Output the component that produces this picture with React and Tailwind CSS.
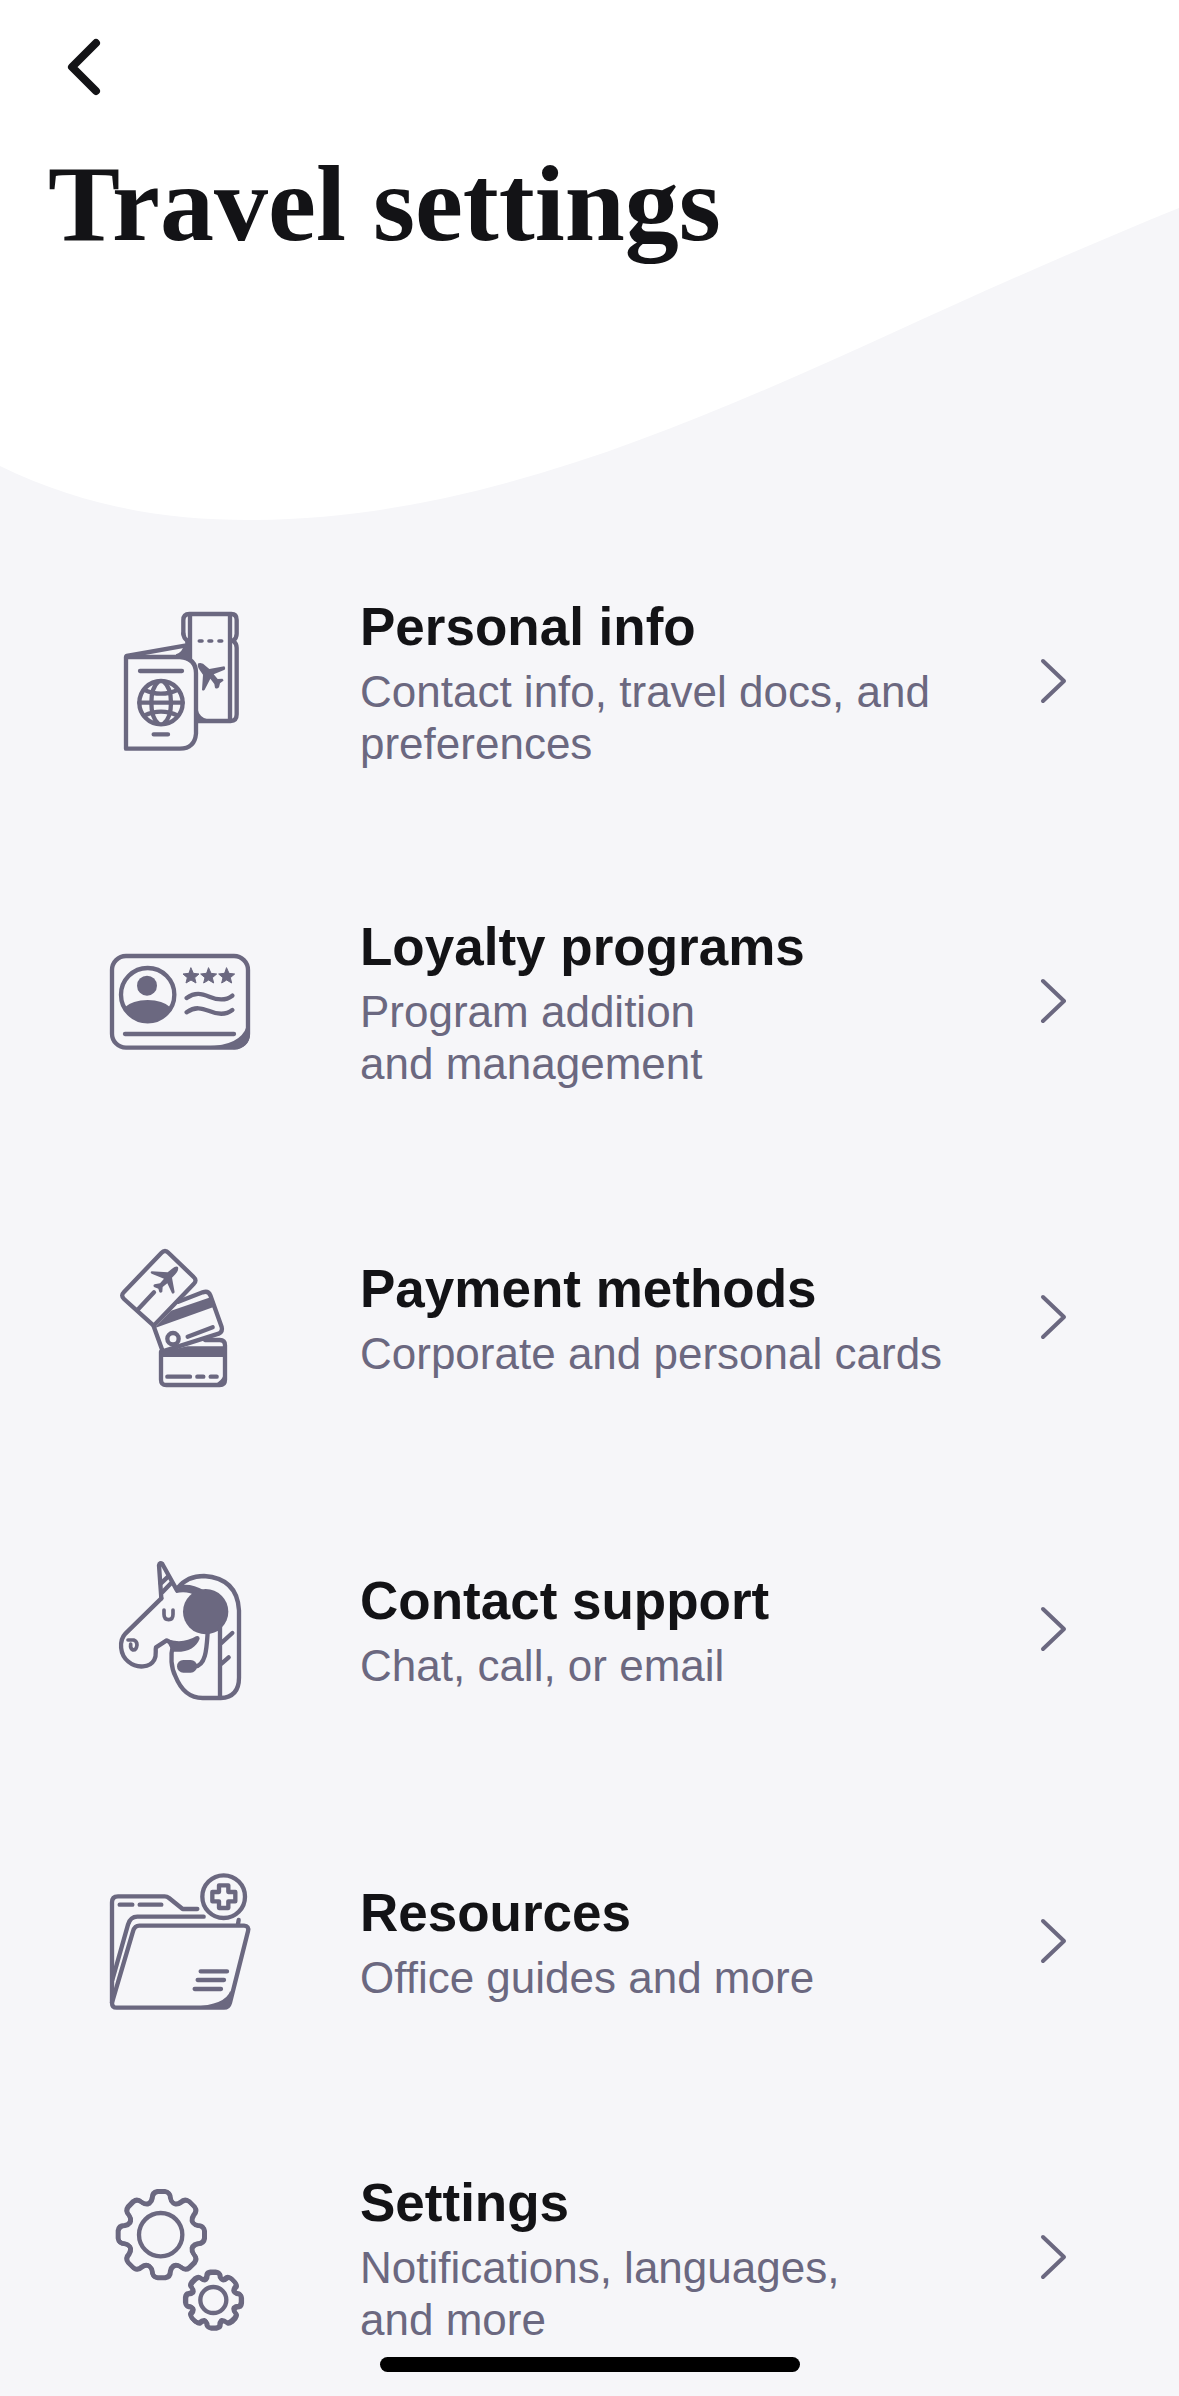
import React from "react";

function Illustration({ viewBox, children }) {
  return (
    <svg
      className="size-[168px]"
      viewBox={viewBox}
      fill="none"
      stroke="currentColor"
      strokeWidth="13"
      strokeLinecap="round"
      strokeLinejoin="round"
      aria-hidden="true"
    >
      {children}
    </svg>
  );
}

function PassportIcon() {
  return (
    <Illustration viewBox="-12 18 504 504">
      <path d="M78 198H240Q288 202 288 246V428Q284 473 240 473H78Z" />
      <path d="M80 195L255 164" />
      <path d="M262 152V202M250 128V88Q250 69 268 69H394Q410 69 410 87V128Q410 142 399 149Q410 157 410 170V370Q410 390 392 390H293" />
      <path d="M250 128Q251 142 262 149" />
      <path d="M270 72V206M390 72V388" />
      <path d="M298 150H306M327 150H335M357 150H365" strokeWidth="11" />
      <path fill="currentColor" stroke="none" d="M228 190Q248 184 252 160H274V212Q258 200 228 196ZM292 352Q298 382 326 386H290Z" />
      <path fill="currentColor" stroke="none" d="M295 217Q306 212 318 226L328 234L373 226Q378 231 374 236L341 250L353 264L367 263Q373 268 368 271L360 277L357 289Q350 296 345 290L343 279L331 263L314 296Q309 301 306 296L309 251L299 237Q290 224 295 217Z" />
      <path d="M120 240H246M161 430H204" />
      <circle cx="183" cy="335" r="65" />
      <path d="M118 335H248M132 296Q183 320 234 296M132 374Q183 350 234 374" />
      <path d="M175 272Q154 290 154 335Q154 380 175 398M191 272Q213 290 213 335Q213 380 191 398" />
    </Illustration>
  );
}

function LoyaltyIcon() {
  const star =
    "M0-24L7-8L24-6L11 5L15 21L0 12L-15 21L-11 5L-24-6L-7-8Z";
  return (
    <Illustration viewBox="-12 -42 504 504">
      <rect x="36" y="75" width="408" height="275" rx="42" />
      <path fill="currentColor" stroke="none" d="M320 346Q422 344 440 286H450V312Q446 350 404 355Z" />
      <circle cx="143" cy="191" r="80" />
      <circle cx="141" cy="164" r="30" fill="currentColor" stroke="none" />
      <path fill="currentColor" stroke="none" d="M72 230Q98 207 143 207Q188 207 213 230A80 80 0 0 1 72 230Z" />
      <g fill="currentColor" strokeWidth="3">
        <path transform="translate(273 135)" d={star} />
        <path transform="translate(326 135)" d={star} />
        <path transform="translate(380 135)" d={star} />
      </g>
      <path d="M260 201C285 183 305 188 328 197C352 207 375 211 397 194M260 244C285 226 305 231 328 240C352 250 375 254 397 237" />
      <path d="M75 309H402" />
    </Illustration>
  );
}

function CardsIcon() {
  return (
    <Illustration viewBox="-12 6 504 504">
      <path d="M184 66Q195 54 206 66L281 138Q292 148 281 159L161 284L72 204Q61 194 72 183Z" />
      <path d="M113 236L162 184" />
      <path fill="currentColor" stroke="none" d="M234 108Q237 118 226 130L216 140L224 184Q220 191 216 187L202 157L188 168L187 182Q182 188 178 183L175 173L162 168Q158 162 164 160L180 157L192 143L155 128Q149 123 155 121L203 124L216 113Q228 104 234 108Z" />
      <path d="M235 212L308 184Q325 178 331 193L365 288Q369 302 356 308L188 361L161 286" />
      <path fill="currentColor" stroke="none" d="M163 292L213 239L334 198L343 227Z" />
      <circle cx="219" cy="323" r="17" />
      <path d="M263 317L338 289" />
      <path d="M183 362V446Q183 462 199 462H359Q375 462 375 446V343Q375 327 359 327H315" />
      <path fill="currentColor" stroke="none" d="M183 363L262 346H377V378H183ZM343 460Q364 452 372 430L376 456Z" />
      <path d="M202 437H270M292 437H310M332 437H350" />
    </Illustration>
  );
}

function UnicornIcon() {
  return (
    <Illustration viewBox="-12 12 504 504">
      <path d="M184 172L177 73Q179 62 187 69L231 148" />
      <path d="M182 128L205 106M187 154L213 127" />
      <path d="M184 172L77 277C55 300 60 342 85 362C112 384 150 380 163 356C171 342 165 330 168 319L200 298Q209 304 218 306" />
      <path fill="currentColor" stroke="none" d="M197 294Q250 310 288 286Q299 282 299 293C288 320 262 336 217 332Z" />
      <path d="M219 312C210 345 214 382 226 405Q252 471 308 471H362Q417 468 417 410V208Q412 112 312 105Q262 105 234 140" />
      <path fill="currentColor" stroke="none" d="M232 134Q272 124 312 148L290 166Q264 148 228 156Z" />
      <circle cx="317" cy="212" r="68" fill="currentColor" stroke="none" />
      <path d="M323 274C320 318 319 374 284 377" />
      <rect x="231" y="357" width="60" height="38" rx="19" fill="currentColor" stroke="none" />
      <path d="M360 258V470M362 308L397 276M362 370L386 349" />
      <path d="M192 207V220Q192 236 206 236Q219 236 219 220V207" strokeWidth="11" />
      <path d="M84 297H101Q111 300 111 312Q109 328 99 327Q90 323 92 309" strokeWidth="11" />
    </Illustration>
  );
}

function FolderIcon() {
  return (
    <Illustration viewBox="-12 3 504 504">
      <path d="M36 440V139Q36 121 54 121H194Q201 121 207 126L248 159H292" />
      <path d="M59 146H97M119 146H184" />
      <path d="M37 372L84 206Q91 182 112 182H311" />
      <path d="M36 440L99 226Q104 209 118 209H432Q448 210 444 226L390 440Q386 455 372 455H50Q36 455 36 440Z" />
      <path fill="currentColor" stroke="none" d="M280 451Q376 447 391 404L396 420L382 458Z" />
      <path d="M302 346H381M293 372H372M284 399H363" />
      <circle cx="371" cy="122" r="64" />
      <path d="M357 88H385V108H406V136H385V156H357V136H337V108H357Z" />
      <path d="M414 204L416 192" />
    </Illustration>
  );
}

function gearPath(cx, cy, outer, inner) {
  const at = (r, deg) => {
    const a = ((deg - 90) * Math.PI) / 180;
    return `${(cx + r * Math.cos(a)).toFixed(1)} ${(cy + r * Math.sin(a)).toFixed(1)}`;
  };
  let d = "";
  for (let i = 0; i < 8; i++) {
    const a = i * 45;
    d += `${i ? "L" : "M"}${at(inner, a - 21)}`;
    d += `Q${at(inner + 3, a - 16)} ${at(inner + 12, a - 14)}`;
    d += `Q${at(outer, a - 12)} ${at(outer, a - 5)}`;
    d += `L${at(outer, a + 5)}`;
    d += `Q${at(outer, a + 12)} ${at(inner + 12, a + 14)}`;
    d += `Q${at(inner + 3, a + 16)} ${at(inner, a + 21)}`;
  }
  return d + "Z";
}

function GearsIcon() {
  return (
    <Illustration viewBox="-12 6 504 504">
      <path d={gearPath(183, 190, 130, 101)} />
      <path d={gearPath(185, 192, 130, 101)} />
      <circle cx="182" cy="191" r="65" />
      <path d={gearPath(339, 386, 84, 67)} />
      <path d={gearPath(342, 389, 84, 67)} />
      <circle cx="340" cy="387" r="39" />
    </Illustration>
  );
}

const items = [
  { title: "Personal info", text: "Contact info, travel docs, and preferences", Icon: PassportIcon },
  { title: "Loyalty programs", text: "Program addition and\u00a0management", Icon: LoyaltyIcon },
  { title: "Payment methods", text: "Corporate and personal cards", Icon: CardsIcon },
  { title: "Contact support", text: "Chat, call, or email", Icon: UnicornIcon },
  { title: "Resources", text: "Office guides and more", Icon: FolderIcon },
  { title: "Settings", text: "Notifications, languages, and\u00a0more", Icon: GearsIcon },
];

function Row({ title, text, Icon }) {
  return (
    <li className="group">
      <a href="#" className="flex min-h-[312px] items-center py-[71px] pr-28 group-last:min-h-0 group-last:pb-12">
        <span className="flex w-[360px] shrink-0 justify-center text-[#6b6880]">
          <Icon />
        </span>
        <span className="flex flex-1 flex-col gap-1 pr-12">
          <span className="text-[53px] leading-[70px] font-bold text-[#131316]">{title}</span>
          <span className="text-[44px] leading-[52px] text-[#6b6880]">{text}</span>
        </span>
        <svg
          className="h-12 w-7 shrink-0 text-[#6b6880]"
          viewBox="0 0 28 48"
          fill="none"
          stroke="currentColor"
          strokeWidth="4"
          strokeLinecap="round"
          strokeLinejoin="round"
          aria-hidden="true"
        >
          <path d="M4 4L25 24L4 44" />
        </svg>
      </a>
    </li>
  );
}

export default function App() {
  return (
    <div className="min-h-screen bg-[#f6f6f9] font-['Liberation_Sans',Arial,sans-serif]">
      <header className="relative isolate min-h-[521px] px-12 pt-8">
        <svg
          className="absolute inset-0 -z-10 h-full w-full"
          viewBox="0 0 1179 521"
          preserveAspectRatio="none"
          aria-hidden="true"
        >
          <path
            fill="#ffffff"
            d="M0 0H1179V208C1090 244 990 288 890 334C700 420 480 520 250 520C160 520 80 505 0 466Z"
          />
        </svg>
        <button type="button" aria-label="Back" className="flex size-18 items-center justify-center text-[#131316]">
          <svg
            className="h-16 w-10"
            viewBox="0 0 40 64"
            fill="none"
            stroke="currentColor"
            strokeWidth="8"
            strokeLinecap="round"
            strokeLinejoin="round"
            aria-hidden="true"
          >
            <path d="M32 7L8 31L32 55" />
          </svg>
        </button>
        <h1 className="mt-10 font-['Liberation_Serif','Times_New_Roman',serif] text-[108px] leading-[120px] font-bold text-[#131316]">
          Travel settings
        </h1>
      </header>
      <main>
        <ul>
          {items.map((item) => (
            <Row key={item.title} {...item} />
          ))}
        </ul>
      </main>
      <div className="fixed inset-x-0 bottom-6 flex justify-center">
        <div className="h-[15px] w-[420px] rounded-full bg-black" />
      </div>
    </div>
  );
}
